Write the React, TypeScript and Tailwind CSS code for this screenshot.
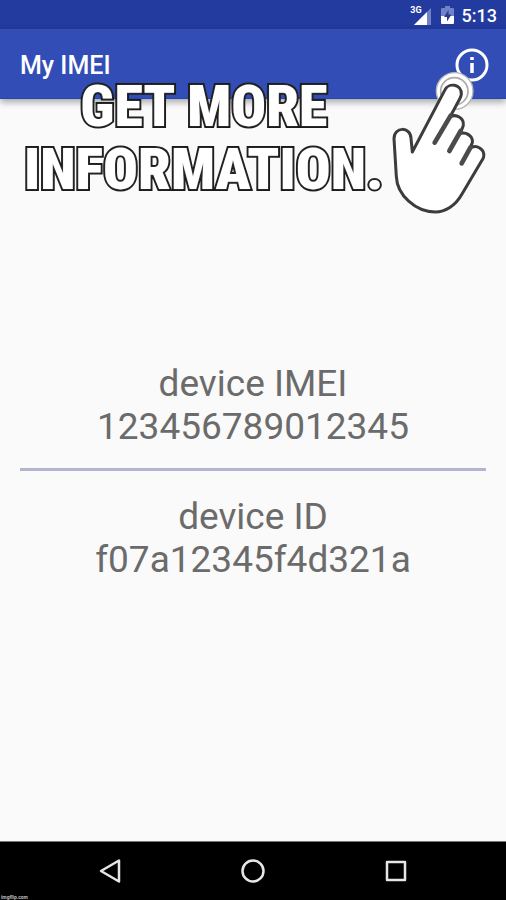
const readings = [
  { label: "device IMEI", value: "123456789012345" },
  { label: "device ID", value: "f07a12345f4d321a" },
];

function StatusBar() {
  return (
    <div className="flex h-[29px] items-center justify-end bg-[#233b9f] pr-[9px] text-white">
      <span className="mb-2 text-[9px] leading-none font-bold">3G</span>
      <svg width="18" height="18" viewBox="0 0 18 18" className="-ml-2 mt-1" aria-hidden="true">
        <path d="M0 17 17 0V17Z" fill="#7182c5" />
        <path d="M0 17 13 4V17Z" fill="white" />
      </svg>
      <svg width="13" height="18" viewBox="0 0 13 18" className="mr-2 ml-[9px]" aria-hidden="true">
        <path d="M4 0H9V2H12Q13 2 13 3V10H0V3Q0 2 1 2H4Z" fill="#7182c5" />
        <path d="M0 10H13V17Q13 18 12 18H1Q0 18 0 17Z" fill="white" />
        <path d="M7.500 4 3 11H6V15.500L10.500 8.500H7.500Z" fill="#233b9f" />
      </svg>
      <span className="mt-0.5 text-[18px] leading-none font-medium">5:13</span>
    </div>
  );
}

function Toolbar() {
  return (
    <header className="flex h-[70px] items-center justify-between border-b border-[#1f49b5] bg-[#324eb6] pr-[17px] pl-5 shadow-[0_3px_7px_rgba(0,0,0,0.35)]">
      <h1 className="mt-1 text-[25px] leading-none font-medium text-white">My IMEI</h1>
      <button type="button" aria-label="Information" className="mt-0.5 text-white">
        <svg width="34" height="34" viewBox="0 0 34 34" fill="none" stroke="currentColor">
          <circle cx="17" cy="17" r="15" strokeWidth="3" />
          <path d="M17 15V25M17 9V12" strokeWidth="3.500" />
        </svg>
      </button>
    </header>
  );
}

function TapHand() {
  return (
    <svg
      width="126"
      height="160"
      viewBox="0 0 378 480"
      className="pointer-events-none absolute top-[60px] right-0"
      aria-hidden="true"
    >
      <circle cx="224" cy="93" r="55" fill="white" stroke="#b5b5b5" strokeWidth="4" />
      <circle cx="223" cy="94" r="41" fill="white" stroke="#aaaaaa" strokeWidth="5" />
      <path
        d="M97 276 194 91C205 66 246 72 244 103Q243 110 239 117L210 171C228 160 252 174 250 195Q249 201 246 207L237 223C256 212 280 228 277 248L269 266C289 250 315 269 311 290Q310 295 306 301L246 402C226 438 195 456 166 456C107 456 51 405 49 349L42 236C42 199 92 199 93 235Z"
        fill="white"
        stroke="#3c3c3e"
        strokeWidth="9"
        strokeLinejoin="round"
      />
      <path
        d="M212 167 164 248M242 213 208 273M271 263 245 310"
        stroke="#4b4b4d"
        strokeWidth="14"
        strokeLinecap="round"
      />
    </svg>
  );
}

function Caption() {
  return (
    <p className="pointer-events-none absolute top-[75px] left-6 text-center font-['Impact','Roboto_Condensed','Liberation_Sans_Narrow',sans-serif] text-[58px] leading-[63px] font-black whitespace-nowrap text-white [-webkit-text-stroke:4px_#1a1a1a] [paint-order:stroke_fill] [text-shadow:0_0_2px_#555]">
      GET MORE
      <br />
      INFORMATION.
    </p>
  );
}

function NavigationBar() {
  return (
    <nav className="relative flex h-[59px] items-center justify-center gap-[118px] border-t border-[#777777] bg-black text-[#e6e6e6]">
      <button type="button" aria-label="Back">
        <svg width="24" height="26" viewBox="0 0 24 26" fill="none" stroke="currentColor" strokeWidth="2.500" strokeLinejoin="round">
          <path d="M3 13 21 2.500V23.500Z" />
        </svg>
      </button>
      <button type="button" aria-label="Home">
        <svg width="26" height="26" viewBox="0 0 26 26" fill="none" stroke="currentColor" strokeWidth="2.500">
          <circle cx="13" cy="13" r="10.500" />
        </svg>
      </button>
      <button type="button" aria-label="Recent apps">
        <svg width="24" height="26" viewBox="0 0 24 26" fill="none" stroke="currentColor" strokeWidth="2.500" strokeLinejoin="round">
          <path d="M3 4H21V22H3Z" />
        </svg>
      </button>
      <small className="absolute -bottom-px left-px text-[5px] leading-[7px] font-bold text-[#bbbbbb]">imgflip.com</small>
    </nav>
  );
}

export default function App() {
  return (
    <div className="relative flex min-h-screen flex-col overflow-hidden bg-[#fafafa] font-['Roboto',sans-serif]">
      <StatusBar />
      <Toolbar />
      <main className="flex flex-1 flex-col justify-center px-5 pt-0.5">
        {readings.map((reading) => (
          <section
            key={reading.label}
            className="text-center text-[37px] leading-[43px] text-[#6b6b6b] first:mb-6 first:border-b-3 first:border-[#b1b5d0] first:pb-5"
          >
            <h2>{reading.label}</h2>
            <p>{reading.value}</p>
          </section>
        ))}
      </main>
      <NavigationBar />
      <Caption />
      <TapHand />
    </div>
  );
}
